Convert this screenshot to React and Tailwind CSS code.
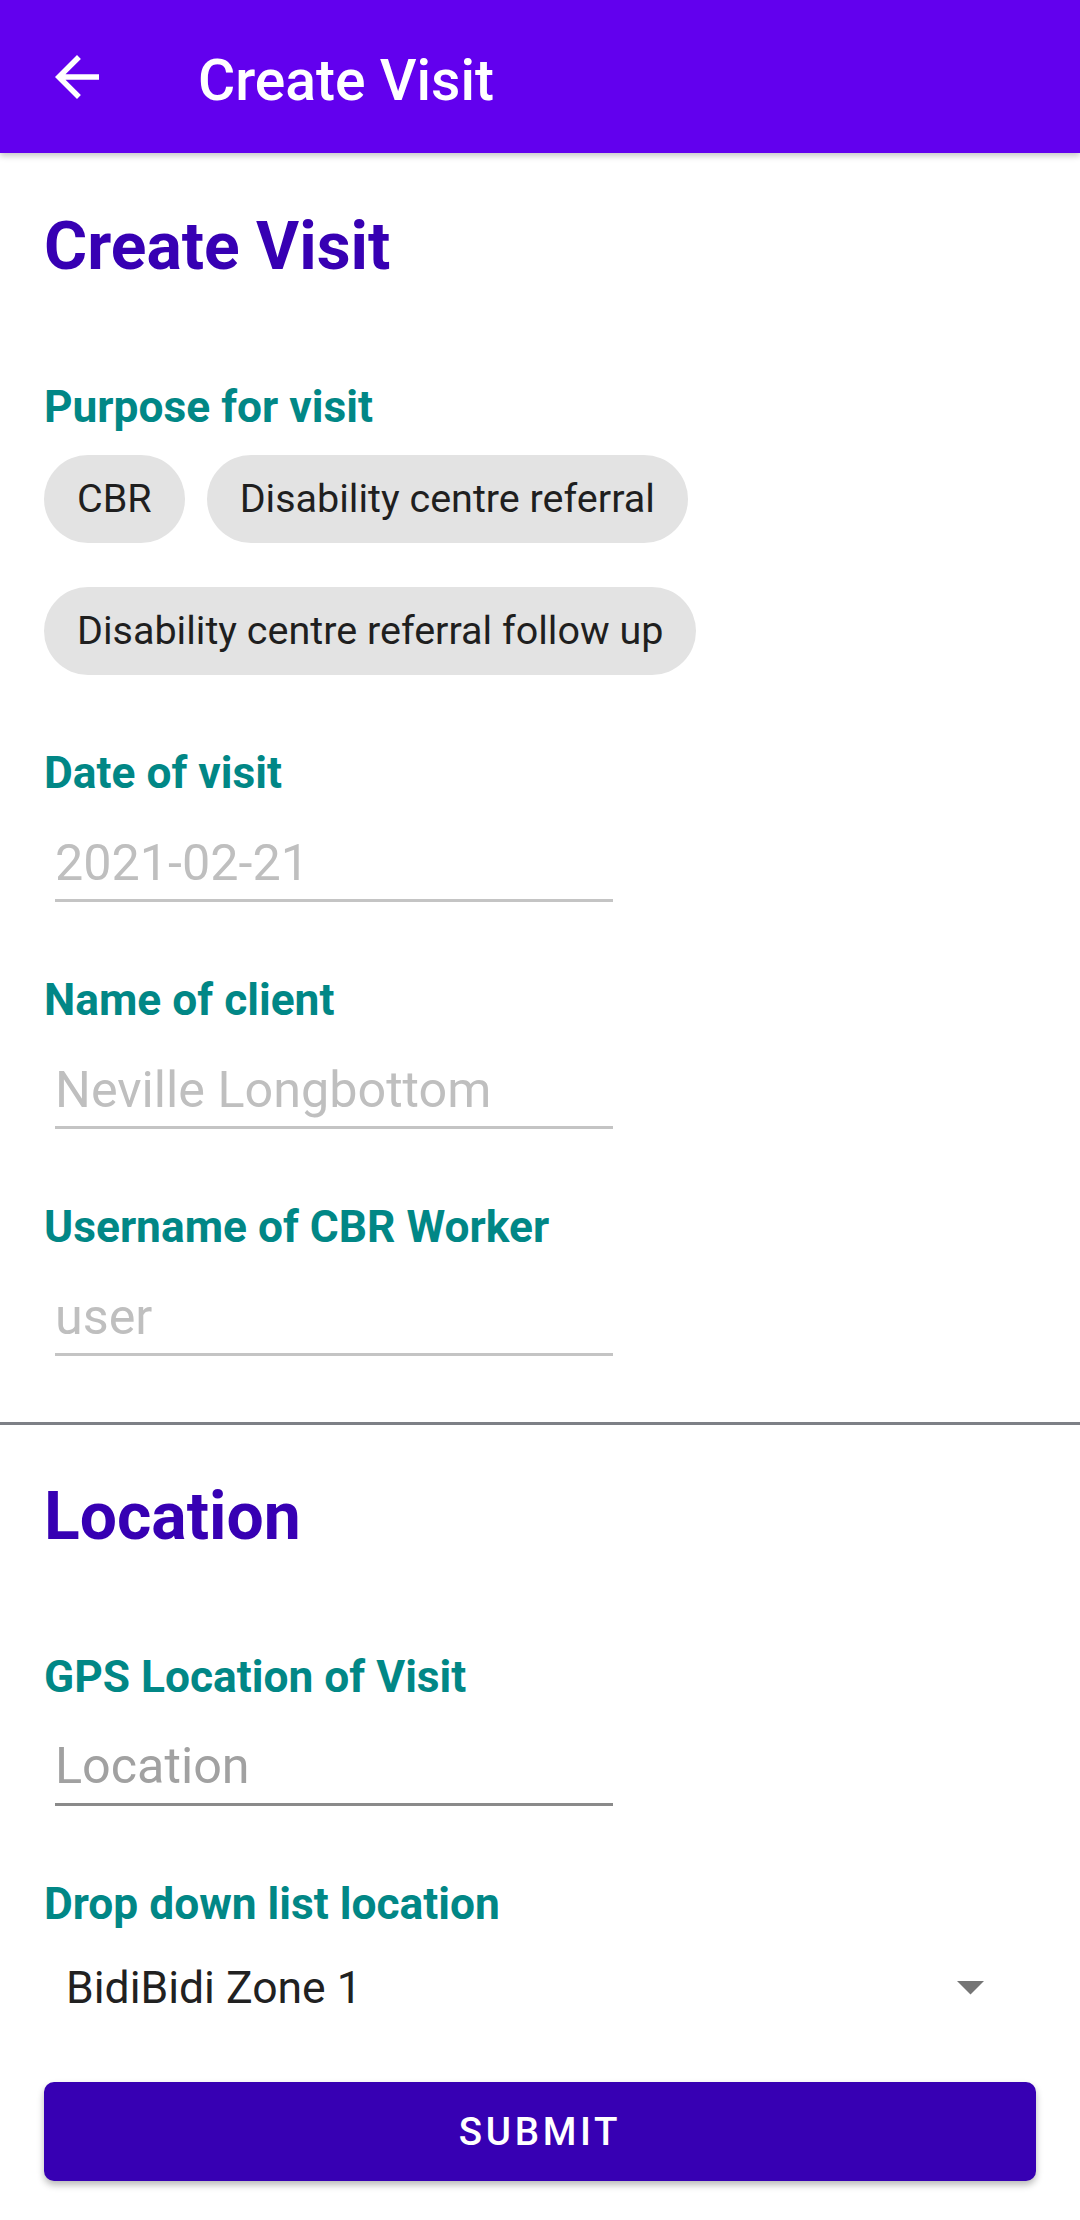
import React from "react";

const font = { fontFamily: "Roboto, 'Noto Sans', sans-serif" };

function Label({ children, className = "" }) {
  return (
    <div className={`text-[44.3px] leading-[44px] font-bold text-[#018786] ${className}`}>
      {children}
    </div>
  );
}

function Field({ value, enabled = false, className = "" }) {
  return (
    <div
      className={`ml-[11px] w-[558px] pb-[11px] border-b-[3px] ${
        enabled ? "border-[#8a8a8a]" : "border-[#c4c4c4]"
      } ${className}`}
    >
      <div
        className={`text-[50.3px] leading-[50px] ${
          enabled ? "text-[#a1a1a1]" : "text-[#bfbfbf]"
        }`}
      >
        {value}
      </div>
    </div>
  );
}

function Chip({ children }) {
  return (
    <div className="h-[88px] px-[33px] rounded-full bg-[#e3e3e3] flex items-center text-[39.5px] leading-[44px] text-[#1f1f1f]">
      {children}
    </div>
  );
}

export default function App() {
  return (
    <div className="w-[1080px] min-h-[2220px] bg-white flex flex-col" style={font}>
      <div className="h-[153px] bg-[#6200EE] flex items-center shadow-[0_3px_6px_rgba(0,0,0,0.22)] relative z-10 shrink-0">
        <div className="ml-[44px] w-[66px] h-[66px] flex items-center justify-center">
          <svg width="66" height="66" viewBox="0 0 24 24" fill="#ffffff">
            <path d="M20 11H7.83l5.59-5.59L12 4l-8 8 8 8 1.41-1.41L7.83 13H20v-2z" />
          </svg>
        </div>
        <div className="ml-[88px] pt-[8px] text-[57px] leading-[55px] font-medium text-white">
          Create Visit
        </div>
      </div>

      <div className="px-[44px] flex flex-col">
        <div className="mt-[60px] text-[66px] leading-[68px] font-bold text-[#3700B3]">
          Create Visit
        </div>

        <Label className="mt-[104px]">Purpose for visit</Label>
        <div className="mt-[26px] flex flex-wrap gap-x-[22px] gap-y-[44px]">
          <Chip>CBR</Chip>
          <Chip>Disability centre referral</Chip>
          <Chip>Disability centre referral follow up</Chip>
        </div>

        <Label className="mt-[76px]">Date of visit</Label>
        <Field value="2021-02-21" className="mt-[43px]" />

        <Label className="mt-[76px]">Name of client</Label>
        <Field value="Neville Longbottom" className="mt-[43px]" />

        <Label className="mt-[76px]">Username of CBR Worker</Label>
        <Field value="user" className="mt-[43px]" />
      </div>

      <div className="mt-[66px] h-[3px] w-full bg-[#7d8086]" />

      <div className="px-[44px] flex flex-col">
        <div className="mt-[58px] text-[66px] leading-[68px] font-bold text-[#3700B3]">
          Location
        </div>

        <Label className="mt-[104px]">GPS Location of Visit</Label>
        <Field value="Location" enabled className="mt-[42px] pb-[12px]" />

        <Label className="mt-[76px]">Drop down list location</Label>
        <div className="mt-[40px] pl-[22px] pr-[52px] flex items-center justify-between">
          <div className="text-[44.5px] leading-[44px] text-[#212121]">BidiBidi Zone 1</div>
          <svg width="27" height="14" viewBox="0 0 27 14">
            <polygon points="0,0 27,0 13.5,13.5" fill="#757575" />
          </svg>
        </div>

        <button className="mt-[72px] h-[99px] w-full rounded-[10px] bg-[#3700B3] shadow-[0_4px_7px_rgba(0,0,0,0.28)] flex items-center justify-center text-white text-[38.5px] leading-[40px] font-medium tracking-[3.7px]">
          SUBMIT
        </button>
      </div>
    </div>
  );
}
